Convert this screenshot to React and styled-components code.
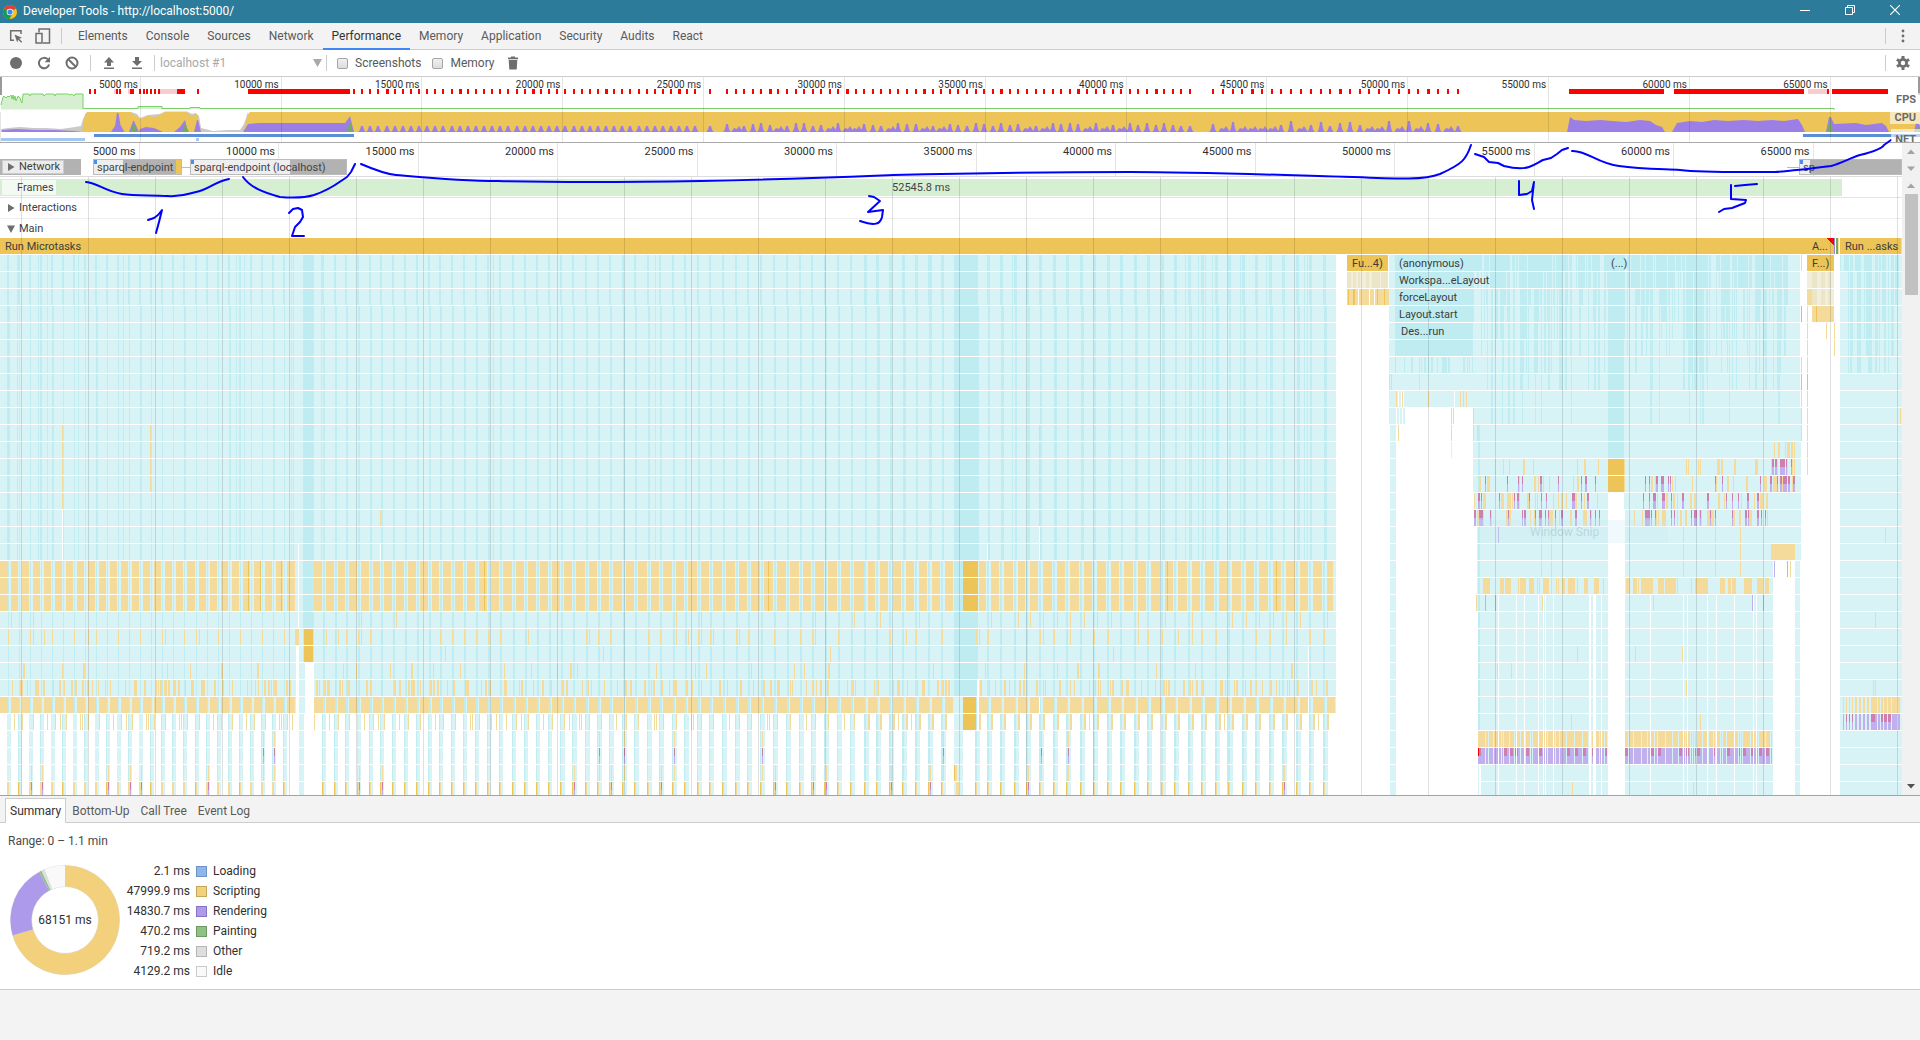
import React from 'react';
import styled, { createGlobalStyle } from 'styled-components';

const FONT = 'Roboto, "Open Sans", "Noto Sans", sans-serif';

const GlobalStyle = createGlobalStyle`
  * { box-sizing: border-box; }
  body { margin: 0; overflow: hidden; background: #f3f3f3; }
  button, input, select { font: inherit; color: inherit; margin: 0; padding: 0; border: 0; background: none; }
`;

/* ---------- colours ---------- */
const C = {
  light: '#d8f3f6',
  dark: '#bfecf1',
  sand: '#f5db9b',
  gold: '#edc457',
  olive: '#f2eedb',
  oliveDark: '#ebe6c8',
  lilac: '#c0b0ee',
  pink: '#cf7eb0',
  blue: '#a9c4ef',
  red: '#f00',
  violet: '#9c7fe6',
  green: '#74ad62',
  white: '#fff',
};

function makeRandom(seed) {
  let s = seed;
  return () => {
    s = (s * 1664525 + 1013904223) % 4294967296;
    return s / 4294967296;
  };
}

/* ---------- flame chart model ---------- */
const CHART_W = 1902;
const ROW = 17;
const ROWS = 33;

function buildFlame() {
  const rnd = makeRandom(42);
  const order = ['light', 'dark', 'olive', 'oliveDark', 'sand', 'gold', 'lilac', 'pink', 'blue', 'green', 'violet', 'red', 'white'];
  const paths = Object.fromEntries(order.map((k) => [k, '']));
  const put = (color, row, x, w, h = 16, dy = 0) => {
    paths[color] += `M${x} ${row * ROW + dy}h${w}v${h}h${-w}z`;
  };
  const span = (color, from, to, x, w) => {
    for (let r = from; r <= to; r += 1) put(color, r, x, w);
  };
  const event = (row, x, w) => {
    put('lilac', row, x, w);
    put('pink', row, x, w, 8);
  };

  /* first long task */
  const starts = [];
  for (let i = 0; i < 26; i += 1) starts.push(Math.round(11 + i * 11.03));
  starts.push(314);
  let x = 326;
  for (let i = 0; i < 44; i += 1) {
    starts.push(Math.round(x));
    x += 11.6 + (1.4 * i) / 43;
  }
  [868, 880, 893, 906, 919, 932, 945, 979, 991, 1004, 1018, 1030].forEach((v) => starts.push(v));
  for (let i = 0; i < 22; i += 1) starts.push(Math.round(1043 + i * 13.52));
  starts.push(1338);

  span('light', 1, 18, 0, 1336);
  span('light', 19, 27, 0, 1336);
  span('sand', 19, 21, 0, 8);
  put('sand', 27, 0, 8);
  [7, 17, 38, 40, 47, 78, 123, 236, 239, 244, 291, 293, 321, 323, 493, 655, 931, 1012, 1185, 1190, 1198, 1205, 1212, 1240, 1266, 1304, 1307].forEach((v) => span('dark', 1, 18, v, 1));
  starts.slice(0, -1).forEach((s, i) => {
    const next = starts[i + 1];
    const w = s > 860 ? 3 : 2;
    span('dark', 1, 3, s - 4, w);
    span('dark', 4, 18, s - 3, s < 300 && i % 4 ? 1 : s > 860 ? 3 - (i % 2) : 2);
    span('dark', 19, 27, s - 4 + (s > 860 ? 0 : 1), s < 300 ? 1 : 2);
    const nearGap = next - s > 20;
    span('sand', 19, 21, s, nearGap ? 8 : next - s - (s > 860 ? 5 : 4));
    put('sand', 27, s, nearGap ? 8 : next - s - 3);
    if (rnd() < 0.13) span('gold', 19, 21, s + 2 + Math.floor(rnd() * 5), 1);
    if (rnd() < (s > 860 ? 0.6 : 0.12)) put('sand', 22, s, 1);
    put('sand', 23, s - 3, 1);
    if (rnd() < 0.2) put('sand', 23, s, 1);
    if (rnd() < 0.04) put('sand', 24, s + 2, 1);
    if (rnd() < 0.35) put('sand', 25, s + Math.floor(rnd() * 8), 1 + Math.floor(rnd() * 1.4));
    const n = 1 + Math.floor(rnd() * 3);
    for (let k = 0; k < n; k += 1) put('sand', 26, s + Math.floor(rnd() * 10) - 3, 1 + Math.floor(rnd() * 1.7));
    span('light', 28, 32, s - 4, s > 560 ? 5 : 4);
    if (s > 150 || i % 2) span('dark', 28, 32, s - 4, s > 860 ? 2 : 1);
    put('sand', 28, s + (s < 860 && i % 3 === 0 ? 3 : 0), s > 860 ? 2 : 1);
    if (rnd() < 0.2) put('sand', 28, s + 5, 1);
    put('sand', 32, s - 4, 2);
    if (s > 314 || i % 4 === 1) put('gold', 32, s - 4, 1);
    if (rnd() < 0.13) {
      put('sand', 29, s - 2, 1);
      event(30, s - 2, 1);
      put('sand', 31, s - 2, 1);
    } else if (rnd() < 0.2) {
      put('sand', 31, s - 2, 1);
      event(32, s - 2, 1);
    }
  });
  span('dark', 1, 24, 303, 11);
  span('gold', 23, 24, 304, 9);
  span('sand', 23, 23, 295, 4);
  span('white', 24, 32, 296, 3);
  span('light', 28, 32, 299, 5);
  span('white', 25, 32, 305, 9);
  span('white', 18, 22, 298, 1);
  span('dark', 1, 26, 954, 24);
  span('gold', 19, 21, 963, 15);
  span('gold', 27, 28, 963, 13);
  span('white', 26, 28, 977, 2);
  span('light', 28, 32, 954, 9);
  put('gold', 31, 954, 1);
  put('sand', 31, 955, 2);
  put('sand', 32, 956, 3);
  span('sand', 11, 15, 62, 1);
  span('sand', 11, 14, 150, 1);
  span('white', 16, 18, 62, 1);
  put('sand', 16, 380, 1);
  put('white', 18, 380, 1);
  span('sand', 11, 16, 1039, 1);
  span('white', 17, 18, 1039, 1);
  put('white', 18, 987, 1);
  put('white', 27, 1039, 1);
  span('white', 24, 27, 1308, 1);

  /* top row */
  put('gold', 0, 0, 1835);
  put('gold', 0, 1840, 61);
  [1799, 1806, 1838, 1901].forEach((v) => put('sand', 0, v, 1));
  put('violet', 0, 1834, 1);
  put('green', 0, 1836, 2);
  paths.red += 'M1826 0h8v8z';

  /* short function call */
  put('gold', 1, 1347, 41);
  put('olive', 2, 1347, 41);
  [[1347, 4], [1353, 3], [1358, 2], [1366, 3], [1372, 8], [1381, 7]].forEach(([a, w]) => put('oliveDark', 2, a, w));
  put('sand', 3, 1347, 42);
  [[1348, 1], [1353, 2], [1377, 1], [1384, 1]].forEach(([a, w]) => put('gold', 3, a, w));
  [1358, 1369, 1374].forEach((v) => put('white', 3, v, 1));

  /* layout task */
  span('light', 1, 8, 1389, 412);
  span('dark', 1, 6, 1395, 78);
  span('dark', 1, 12, 1608, 16);
  const density = [0, 0.86, 0.78, 0.6, 0.52, 0.42, 0.34, 0.25, 0.17, 0.04, 0.04];
  const stripes = (x0, x1, dens) => {
    let c = x0;
    while (c < x1) {
      const w = rnd() < 0.7 ? 1 : 2;
      const v = rnd();
      for (let r = 1; r < dens.length; r += 1) if (v < dens[r]) put('dark', r, c, Math.min(w, x1 - c));
      c += w;
    }
  };
  stripes(1473, 1608, density);
  stripes(1624, 1788, density);
  stripes(1400, 1473, [0, 0, 0, 0, 0, 0, 0, 0.35, 0.04]);
  put('light', 6, 1411, 1);
  put('light', 9, 1389, 412);
  [1398, 1401, 1403, 1454].forEach((v) => put('white', 9, v, 1));
  span('light', 10, 10, 1389, 16);
  [1396, 1399, 1402].forEach((v) => put('white', 10, v, 1));
  span('light', 11, 32, 1390, 6);
  span('light', 10, 14, 1473, 135);
  span('light', 10, 15, 1624, 177);
  span('light', 15, 16, 1474, 134);
  span('light', 17, 21, 1477, 131);
  span('light', 22, 32, 1478, 130);
  span('light', 16, 18, 1625, 176);
  span('light', 19, 32, 1625, 148);
  span('light', 19, 32, 1795, 5);
  span('dark', 11, 28, 1478, 2);
  span('gold', 13, 14, 1608, 16);
  span('sand', 13, 14, 1624, 1);
  [[7, 1395], [8, 1389], [8, 1391], [9, 1396], [9, 1402], [9, 1428], [9, 1460], [9, 1463], [9, 1466], [10, 1451], [10, 1453], [11, 1398], [11, 1451], [10, 1473], [11, 1473], [11, 1477]].forEach(([r, a]) => put('sand', r, a, 1));
  put('light', 12, 1451, 1);
  const ticks = (row, x0, x1, count, kind, maxW = 2) => {
    for (let i = 0; i < count; i += 1) {
      const a = Math.floor(x0 + rnd() * (x1 - x0));
      const w = 1 + Math.floor(rnd() * rnd() * maxW * 1.4);
      if (kind === 'mix' && rnd() < 0.45) event(row, a, w);
      else put('sand', row, a, w);
    }
  };
  ticks(13, 1490, 1600, 8, 'sand');
  ticks(13, 1635, 1765, 11, 'sand');
  ticks(14, 1474, 1600, 22, 'mix');
  ticks(14, 1630, 1765, 20, 'mix');
  ticks(15, 1474, 1605, 34, 'mix');
  ticks(15, 1630, 1768, 34, 'mix');
  ticks(16, 1474, 1605, 44, 'mix', 3);
  ticks(16, 1630, 1768, 46, 'mix', 3);
  ticks(12, 1772, 1795, 12, 'sand');
  ticks(13, 1770, 1795, 22, 'mix');
  ticks(14, 1770, 1795, 24, 'mix');
  put('lilac', 17, 1498, 1);
  [1541, 1551, 1683, 1715, 1740].forEach((v) => span('sand', 17, 19, v, 1));
  put('sand', 18, 1771, 24);
  put('lilac', 19, 1774, 1);
  put('lilac', 19, 1787, 1);
  put('sand', 19, 1790, 1);
  ticks(20, 1480, 1605, 40, 'sand', 4);
  ticks(20, 1626, 1768, 42, 'sand', 5);
  [[21, 1476], [21, 1542], [21, 1653], [24, 1577], [24, 1635], [24, 1682], [25, 1497], [25, 1511], [26, 1686], [28, 1571], [28, 1700], [32, 1572], [32, 1693], [22, 1875], [17, 1885], [10, 1900], [26, 1873], [26, 1875]].forEach(([r, a]) => put('sand', r, a, 1));
  [[21, 1485], [21, 1495], [21, 1752], [21, 1763]].forEach(([r, a]) => put('lilac', r, a, 1));
  const dense = (x0, x1) => {
    let a = x0;
    while (a < x1) {
      const w = Math.min(1 + Math.floor(rnd() * 7), x1 - a);
      put('sand', 29, a, w);
      put('lilac', 30, a, w);
      if (rnd() < 0.5) put('pink', 30, a, Math.min(w, 3), 8);
      a += w + 1;
    }
  };
  dense(1478, 1607);
  dense(1625, 1772);
  put('red', 30, 1478, 1, 8);
  [[1498, 1], [1516, 1], [1524, 1], [1538, 1], [1543, 1], [1545, 1], [1553, 1], [1589, 2], [1593, 3], [1601, 1], [1650, 1], [1683, 1], [1687, 1], [1707, 1], [1716, 1], [1734, 1], [1753, 1], [1756, 1]].forEach(([a, w]) => span('white', 21, 32, a, w));
  span('white', 31, 32, 1479, 2);

  /* right edge of the layout task and animation frame */
  span('white', 1, 9, 1800, 1);
  [[1, 'sand'], [4, 'lilac'], [7, 'sand'], [8, 'blue'], [9, 'sand'], [10, 'sand'], [11, 'sand']].forEach(([r, c]) => put(c, r, 1801, 1));
  put('gold', 1, 1807, 27);
  put('olive', 2, 1807, 27);
  put('olive', 3, 1812, 22);
  put('sand', 3, 1807, 5);
  [[1812, 5], [1821, 4], [1828, 3]].forEach(([a, w]) => span('oliveDark', 2, 3, a, w));
  put('sand', 4, 1812, 22);
  put('gold', 4, 1816, 1);
  span('sand', 4, 13, 1807, 1);
  put('blue', 8, 1807, 1);
  put('sand', 5, 1826, 1);
  span('sand', 5, 6, 1834, 1);

  /* last microtask run */
  span('light', 1, 32, 1840, 62);
  stripes(1840, 1901, [0, 0.72, 0.6, 0.56, 0.52, 0.5, 0.47, 0.4]);
  let a = 1843;
  while (a < 1901) {
    const w = Math.min(a < 1870 ? 1 + Math.floor(rnd() * 2) : 2 + Math.floor(rnd() * 5), 1901 - a);
    put('sand', 27, a, w);
    put('lilac', 28, a, w);
    if (rnd() < 0.6) put('pink', 28, a, Math.min(w, 4), 8);
    a += w + (a < 1870 ? 2 : 1);
  }

  return order.map((k) => ({ color: C[k], d: paths[k] }));
}

const FLAME = buildFlame();
const FLAME_LABELS = [
  [0, 5, 'Run Microtasks'], [0, 1812, 'A...'], [0, 1845, 'Run ...asks'],
  [1, 1352, 'Fu...4)'], [1, 1399, '(anonymous)'], [1, 1611, '(...)'], [1, 1812, 'F...)'],
  [2, 1399, 'Workspa...eLayout'], [3, 1399, 'forceLayout'], [4, 1399, 'Layout.start'], [5, 1401, 'Des...run'],
];

/* ---------- overview model ---------- */
function buildOverview() {
  const marks = [[89, 2], [94, 2], [116, 2], [119, 2], [130, 4], [139, 2], [143, 2], [146, 2], [150, 2], [154, 2], [158, 2], [177, 8], [197, 2], [248, 102], [1569, 95], [1674, 130], [1827, 2], [1832, 56]];
  const pale = [[114, 2], [128, 2], [160, 17], [1808, 19]];
  const beats = [];
  for (let i = 0; i < 43; i += 1) beats.push(Math.round(354 + i * 8.13));
  beats.push(710);
  for (let i = 0; i < 55; i += 1) beats.push(Math.round(727 + i * 8.57));
  for (let i = 0; i < 26; i += 1) beats.push(Math.round(1213 + i * 9.78));
  const rnd = makeRandom(9);
  let peaks = '';
  beats.forEach((b, i) => {
    marks.push([b - 1, i % 9 === 4 ? 3 : 2]);
    if (i === 0) return;
    const growth = b > 1200 ? 5 : b > 720 ? 3 : 0;
    const blunt = b > 720 && rnd() < 0.2;
    if (blunt) peaks += `M${b - 5} 132l3 -4l3 1l2 -3l4 6z`;
    else {
      const h = 6 + Math.floor(rnd() * (growth + 1));
      peaks += `M${b - 4} 132q2 -1 3 ${-h}h2q1 ${h - 1} 3 ${h}z`;
    }
  });
  return { marks, pale, peaks };
}
const OVERVIEW = buildOverview();
const FPS_EDGE = '1 105 3 97 4 96 6 98 8 96 9 97 11 95 12 99 13 95 14 100 15 96 16 101 18 96 20 98 21 101 22 103 23 94 29 94 30 96 31 94 43 94 44 96 46 94 54 94 55 96 56 94 68 94 70 95 72 94 74 96 75 94 83 94';
const TIMES = Array.from({ length: 13 }, (_, i) => `${(i + 1) * 5000} ms`);

/* ---------- layout ---------- */
const Shell = styled.div`
  display: flex; flex-direction: column; height: 100vh; width: 100%;
  background: #fff; color: #303030; font: 12px/16px ${FONT}; overflow: hidden;
`;
const TitleBar = styled.header`
  display: flex; align-items: center; flex: none; height: 23px; padding: 0 3px;
  background: #2d7b9a; color: #fff;
`;
const Title = styled.h1`
  margin: 0 auto 0 6px; font-size: 12px; line-height: 23px; font-weight: 400;
`;
const WindowButton = styled.button`
  width: 45px; height: 20px; display: grid; place-items: center; align-self: flex-start;
  svg { display: block; }
`;
const TabBar = styled.nav`
  display: flex; align-items: center; flex: none; height: 27px;
  background: #f3f3f3; border-bottom: 1px solid #ccc; color: #5a5a5a;
`;
const IconButton = styled.button`
  width: ${(p) => p.$w || 28}px; height: 26px; display: grid; place-items: center; flex: none;
  color: #6e6e6e;
  svg { display: block; }
`;
const Divider = styled.span`
  width: 1px; height: 16px; background: #ccc; flex: none; margin: 0 ${(p) => p.$gap || 0}px;
`;
const Tab = styled.button`
  height: 27px; padding: 0 9px; line-height: 27px; align-self: flex-start;
  color: ${(p) => (p.$active ? '#333' : '#5a5a5a')};
  border-bottom: 2px solid ${(p) => (p.$active ? '#4285f4' : 'transparent')};
`;
const Spacer = styled.span`flex: 1;`;
const Toolbar = styled.div`
  display: flex; align-items: center; flex: none; height: 27px; padding-left: 2px;
  border-bottom: 1px solid #ccc;
`;
const SessionPicker = styled.label`
  display: flex; align-items: center; width: 168px; padding: 0 4px 0 2px; color: #a9a9a9;
  select { appearance: none; flex: 1; line-height: 16px; outline: 0; }
`;
const Check = styled.label`
  display: flex; align-items: center; gap: 7px; color: #5a5a5a; margin-left: ${(p) => p.$gap}px;
  input {
    appearance: none; width: 11px; height: 11px; border: 1px solid #a5a5a5; border-radius: 2px;
    background: linear-gradient(#f0f0f0, #dcdcdc);
  }
`;

const Workspace = styled.main`
  position: relative; display: flex; flex-direction: column; flex: 1; min-height: 0;
`;
const Overview = styled.section`
  display: grid; flex: none; height: 66px; overflow: hidden; border-bottom: 1px solid #aaa;
  > * { grid-area: 1 / 1; min-width: 0; }
`;
const Ruler = styled.div`
  display: flex; height: ${(p) => p.$h}px; color: #303030;
  font-size: ${(p) => p.$size}px; line-height: ${(p) => p.$line}px;
`;
const Tick = styled.span`
  flex: none; width: 7.335%; text-align: right; white-space: nowrap; padding-right: ${(p) => p.$pad}px;
  border-right: 1px solid rgba(0, 0, 0, 0.1);
`;
const OverviewRuler = styled(Ruler)`z-index: 1;`;
const Plot = styled.svg`
  display: block; width: 100%; height: ${(p) => p.$h}px;
`;
const LaneNames = styled.div`
  z-index: 1; display: flex; flex-direction: column; align-items: flex-end; gap: 5px; padding-top: 16px;
  font-size: 11px; line-height: 13px; font-weight: 700; color: #6a6a6a;
  span { padding: 0 4px; height: 13px; background: rgba(255, 255, 255, 0.6); }
  span:last-child { padding-top: 4px; height: 20px; }
`;

const Timeline = styled.section`
  display: flex; flex: 1; min-height: 0; overflow: hidden;
`;
const Lanes = styled.div`
  flex: 1; min-width: 0; display: flex; flex-direction: column; font-size: 11px;
`;
const NetworkPane = styled.div`
  position: relative; flex: none; height: 34px; border-bottom: 1px solid #ddd;
`;
const Request = styled.div`
  position: absolute; top: 16px; height: 16px; overflow: hidden; white-space: nowrap; line-height: 15px;
  border: 1px solid #bbb; padding-left: 3px; color: #444;
`;
const QueueMark = styled.i`
  position: absolute; left: 0; top: 0; width: 3px; height: 4px; background: #4b8fe8;
`;
const Whisker = styled.i`
  position: absolute; top: 24px; height: 1px; background: #bbb;
`;
const LaneButton = styled.button`
  position: relative; display: flex; align-items: center; gap: 4px; height: 14px; line-height: 14px;
  margin-left: ${(p) => (p.$boxed ? 2 : 0)}px; padding: 0 3px 0 4px; color: #404040;
  background: ${(p) => (p.$boxed ? 'rgba(255,255,255,.75)' : 'none')};
  border: ${(p) => (p.$boxed ? '1px solid #ccc' : 0)};
  svg { display: block; }
`;
const NetworkHead = styled.div`
  position: absolute; left: 0; top: 16px; width: 81px; height: 16px; padding-top: 1px; background: #b2b2b2;
`;
const Tracks = styled.div`
  position: relative; flex: 1; min-height: 0; overflow: hidden;
`;
const Track = styled.div`
  display: flex; align-items: center; height: ${(p) => (p.$last ? 19 : 21)}px; padding-left: 3px;
  border-bottom: ${(p) => (p.$last ? 0 : '1px solid #eee')};
`;
const FrameTrack = styled.div`
  display: flex; height: 21px; padding-top: 2px; border-bottom: 1px solid #e4e4e4;
`;
const FrameBar = styled.div`
  position: relative; display: grid; width: 96.85%; height: 17px; background: #d6efd2; line-height: 18px;
  justify-items: center; color: #444;
`;
const FrameLabel = styled.span`
  position: absolute; left: 2px; top: 1px; height: 15px; line-height: 15px; padding: 0 2px 0 15px;
  background: rgba(255, 255, 255, 0.7); color: #404040;
`;
const GridOverlay = styled(Plot)`
  position: absolute; left: 0; top: 0; height: 100%; pointer-events: none;
`;
const FlameWrap = styled.div`
  position: relative; height: ${ROWS * ROW}px;
`;
const FlameLabel = styled.span`
  position: absolute; font-size: 11px; line-height: 17px; white-space: nowrap; color: #3c3c3c;
`;
const Ghost = styled.div`
  position: absolute; width: 10%; height: 23px; line-height: 24px; padding-left: 52px;
  background: rgba(196, 232, 243, 0.25); color: rgba(120, 150, 160, 0.3); font-size: 12px;
`;
const ScrollColumn = styled.div`
  display: flex; flex-direction: column; align-items: center; flex: none; width: 18px; background: #f1f1f1; color: #a3a3a3;
  svg { display: block; flex: none; }
`;
const Thumb = styled.div`
  width: 13px; height: 101px; background: #c1c1c1; flex: none;
`;
const Notes = styled.svg`
  position: absolute; left: 0; top: 0; width: 100%; height: 180px; pointer-events: none; overflow: visible;
`;

const Details = styled.section`
  flex: none; border-top: 1px solid #a3a3a3;
`;
const DetailTabs = styled.nav`
  display: flex; align-items: flex-end; height: 27px; padding-left: 5px; background: #f3f3f3; border-bottom: 1px solid #ccc;
`;
const DetailTab = styled.button`
  height: 25px; line-height: 24px; padding: 0 4px; margin-bottom: -1px; margin-right: 1px;
  color: ${(p) => (p.$active ? '#333' : '#5a5a5a')};
  background: ${(p) => (p.$active ? '#fff' : 'none')};
  border: 1px solid ${(p) => (p.$active ? '#ccc' : 'transparent')};
  border-bottom: 0;
`;
const SummaryBody = styled.div`
  height: 167px; padding: 9px 8px; border-bottom: 1px solid #ccc; color: #303030;
`;
const Range = styled.p`margin: 0; line-height: 18px; color: #4a4a4a;`;
const SummaryRow = styled.div`display: flex; margin-top: 11px;`;
const Donut = styled.div`
  display: grid; place-items: center; width: 114px; height: 118px;
  > * { grid-area: 1 / 1; }
  svg { display: block; }
`;
const Legend = styled.table`
  border-collapse: collapse;
  td, th { padding: 0; height: 20px; line-height: 20px; font-weight: 400; text-align: left; }
  td:first-child { width: 68px; text-align: right; white-space: nowrap; }
`;
const Swatch = styled.span`
  display: block; width: 11px; height: 11px; margin: 0 6px; background: ${(p) => p.$c}; border: 1px solid ${(p) => p.$b};
`;
const Footer = styled.footer`flex: none; height: 50px; background: #f3f3f3;`;

/* ---------- small drawings ---------- */
const Triangle = ({ open }) => (
  <svg width="8" height="10" viewBox="0 0 8 10" fill="#6e6e6e"><path d={open ? 'M0 1.500h8L4 9z' : 'M1 1l6.500 4L1 9z'} /></svg>
);
const Arrow = ({ up, dark, h }) => (
  <svg width="18" height={h} viewBox="0 0 18 16" preserveAspectRatio="xMidYMid" fill={dark ? '#505050' : 'currentColor'}>
    <path d={up ? 'M9 6l4 4.500H5z' : 'M5 6h8L9 10.500z'} />
  </svg>
);

const SLICES = [
  [47999.9, '#f2d07c'], [14830.7, '#ae9aea'], [470.2, '#8fc184'], [719.2, '#dedede'], [4131.3, '#f9f9f9'],
];
function slicePaths() {
  const total = SLICES.reduce((s, [v]) => s + v, 0);
  let acc = 0;
  const pt = (r, t) => `${(57 + r * Math.sin(t)).toFixed(2)} ${(57 - r * Math.cos(t)).toFixed(2)}`;
  return SLICES.map(([v, fill]) => {
    const a = (acc / total) * Math.PI * 2;
    acc += v;
    const b = (acc / total) * Math.PI * 2;
    const big = b - a > Math.PI ? 1 : 0;
    return { fill, d: `M${pt(54.5, a)}A54.5 54.5 0 ${big} 1 ${pt(54.5, b)}L${pt(33.5, b)}A33.5 33.5 0 ${big} 0 ${pt(33.5, a)}z` };
  });
}
const LEGEND = [
  ['2.1 ms', 'Loading', '#8fb6ea', '#6d93c6'],
  ['47999.9 ms', 'Scripting', '#f2d07c', '#c5a65a'],
  ['14830.7 ms', 'Rendering', '#ae9aea', '#8673c4'],
  ['470.2 ms', 'Painting', '#8fc184', '#6d9a62'],
  ['719.2 ms', 'Other', '#dedede', '#b5b5b5'],
  ['4129.2 ms', 'Idle', '#f9f9f9', '#cacaca'],
];
const pct = (v) => `${(v / CHART_W) * 100}%`;

function OverviewPlot() {
  return (
    <Plot $h={65} viewBox="0 77 1920 65" preserveAspectRatio="none" aria-hidden="true">
      <path d="M0 77h2v18h-2zM1918 77h2v18h-2z" fill="#999" />
      <path d={`M1 109.500L${FPS_EDGE}V109.500zM138 106h24v3h-24zM190 107h10v2h-10z`} fill="#d6efd0" />
      <path d={`M${FPS_EDGE}V108.500H138V106.500H162V108.500H190V107.500H200V108.500H1834V110`} fill="none" stroke="#7bd068" />
      <path d="M0 112v30" stroke="#ccc" />
      <path d="M1 132v-3l7 -1 12 -1 14 1 12 0 15 1 14 -2 6 -1 2 -7 4 -7H131L137 114 140 118 148 115 160 114 165 111.500H187L192 114 196 113 199 116 201 128 213 131 228 130 240 130 244 124 248 112V132z" fill="#c9c9c9" />
      <path d="M82 132L85 114 88 112H130L136 116 141 119 148 116 155 117 163 113 166 112H186L192 116 197 114 201 132zM243 132L248 114 250 112H1920V132z" fill={C.gold} />
      <path d="M2 132v-2l14 -1 20 1 18 0 20 1 8 1zM111 132l4 -6 2 -13h1.500l2 12 4 7zM129 132l4 -11h1l5 11zM139 132l1 -3 6 -2 8 1 9 4zM174 132l6 -5 5 -7 3 12zM194 132l3 -12h1l3 12zM243 132l5 -8 10 -1h87l3 -4 2 -3 4 16z" fill={C.violet} />
      <path d="M7 132l4 -1 5 1zM131 132l2 -8h1l3 8zM182 132l3 -8 4 8zM347 132l3 -11 3 11z" fill={C.green} />
      <path d={OVERVIEW.peaks} fill={C.violet} />
      <path d="M1567 132L1570 117 1574 120 1586 121 1600 120 1612 121 1626 122 1640 120 1650 121 1656 125 1662 127 1665 132zM1672 132L1677 123 1690 121 1702 122 1714 120 1728 121 1744 120 1758 121 1772 120 1784 121 1798 119 1802 125 1805 132zM1826 132L1829 117H1831L1834 124 1856 123 1866 125 1882 123 1886 126 1889 132zM1914 132l2 -9h2l2 3V132z" fill={C.violet} />
      <path d="M1827 132l3 -13 3 13zM1915 132l3 -5 2 2v3z" fill={C.green} />
      <g shapeRendering="crispEdges">
        {OVERVIEW.pale.map(([x, w]) => <rect key={x} x={x} y="89" width={w} height="5" fill="#f8cccc" />)}
        {OVERVIEW.marks.map(([x, w]) => <rect key={x} x={x} y="89" width={w} height="5" fill="#f00" />)}
        <rect x="94" y="134" width="260" height="3" fill="#5b8ed2" />
        <rect x="1803" y="134" width="117" height="3" fill="#5b8ed2" />
        <rect x="1" y="138" width="84" height="3" fill="#a5c6f5" />
        <rect x="196" y="138" width="3" height="3" fill="#a5c6f5" />
      </g>
    </Plot>
  );
}

const NOTE_PATHS = [
  'M86 182C98 183 104 191 122 194C135 196 150 195 167 196C185 197 190 193 196 192C208 190 214 182 229 179',
  'M243 177C250 187 262 192 280 197C292 198 304 198 314 195C326 191 334 186 341 181L347 177L351 172L355 164',
  'M361 164C375 170 385 174 396 175C430 178 460 181 498 181C580 183 640 182 701 181C790 179 840 177 893 175C980 173 1060 172 1130 172C1200 172 1280 175 1353 177C1400 179 1425 180 1440 174C1462 164 1466 160 1471 145',
  'M1475 154L1484 157L1489 162L1498 163L1504 166C1512 168 1523 169 1529 167C1535 165 1539 162 1543 160L1551 158L1557 154L1562 150L1568 148',
  'M1572 151C1586 150 1598 164 1619 166C1640 169 1660 169 1680 170C1705 173 1753 172 1775 172C1790 171 1815 168 1831 166C1842 163 1850 158 1860 155C1872 152 1882 149 1884 145L1891 140',
  'M148 220L154 218L158 215L162 210L159 222L156 233',
  'M289 213L293 209L298 208L302 210L303 217L300 222L295 227L292 236L304 236',
  'M869 196L874 197L880 201L868 212L883 210L882 217C880 226 872 225 860 221',
  'M1519 181V195L1527 194L1532 191L1534 182L1532 200L1534 209',
  'M1735 186L1745 185L1757 184M1731 185V199L1746 200L1745 203L1732 208L1724 209L1719 212',
];

export default function App() {
  return (
    <Shell>
      <GlobalStyle />
      <TitleBar>
        <svg width="14" height="14" viewBox="0 0 14 14" aria-hidden="true">
          <circle cx="7" cy="7" r="7" fill="#fbc116" />
          <path d="M7 7L.94 3.500A7 7 0 0 1 13.100 3.500z" fill="#db4437" />
          <path d="M7 7L.94 3.500A7 7 0 0 0 6.500 14L9.500 8.500z" fill="#0f9d58" />
          <circle cx="7" cy="7" r="3.300" fill="#fff" /><circle cx="7" cy="7" r="2.600" fill="#4285f4" />
        </svg>
        <Title>Developer Tools - http://localhost:5000/</Title>
        <WindowButton aria-label="Minimize"><svg width="10" height="10" stroke="#fff"><path d="M0 5.500h10" /></svg></WindowButton>
        <WindowButton aria-label="Restore"><svg width="10" height="10" stroke="#fff" fill="none"><path d="M.5 2.500h7v7h-7zM2.500 2.500v-2h7v7h-2" /></svg></WindowButton>
        <WindowButton aria-label="Close"><svg width="10" height="10" stroke="#fff" strokeWidth="1.200"><path d="M0 0l10 10M10 0L0 10" /></svg></WindowButton>
      </TitleBar>

      <TabBar>
        <IconButton $w={32} aria-label="Inspect element">
          <svg width="14" height="14" viewBox="0 0 14 14" fill="none" stroke="currentColor" strokeWidth="1.500"><path d="M5 11.200H1.700V1.700H12V5" /><path d="M5.500 5.500l7.500 3.200-2.800 1 3 3-1 1-3-3-1 2.800z" fill="currentColor" stroke="none" /></svg>
        </IconButton>
        <IconButton $w={22} aria-label="Toggle device toolbar">
          <svg width="16" height="16" viewBox="0 0 16 16" fill="none" stroke="currentColor" strokeWidth="1.500"><path d="M4 4.500V1h10.500v14H8" /><path d="M1 5.500h6v9.500H1z" /></svg>
        </IconButton>
        <Divider $gap={7} />
        {['Elements', 'Console', 'Sources', 'Network', 'Performance', 'Memory', 'Application', 'Security', 'Audits', 'React'].map((t) => (
          <Tab key={t} $active={t === 'Performance'}>{t}</Tab>
        ))}
        <Spacer />
        <Divider />
        <IconButton $w={34} aria-label="More options">
          <svg width="4" height="14" fill="currentColor"><circle cx="2" cy="2" r="1.400" /><circle cx="2" cy="7" r="1.400" /><circle cx="2" cy="12" r="1.400" /></svg>
        </IconButton>
      </TabBar>

      <Toolbar>
        <IconButton aria-label="Record"><svg width="12" height="12"><circle cx="6" cy="6" r="6" fill="currentColor" /></svg></IconButton>
        <IconButton aria-label="Reload"><svg width="14" height="14" viewBox="0 0 14 14" fill="none" stroke="currentColor" strokeWidth="2"><path d="M12.100 8.500A5.200 5.200 0 1 1 10.800 3.400" /><path d="M13 .8v5.400H7.600z" fill="currentColor" stroke="none" /></svg></IconButton>
        <IconButton aria-label="Clear"><svg width="14" height="14" viewBox="0 0 14 14" fill="none" stroke="currentColor" strokeWidth="2"><circle cx="7" cy="7" r="5.500" /><path d="M3 3l8 8" /></svg></IconButton>
        <Divider $gap={4} />
        <IconButton aria-label="Load profile"><svg width="12" height="14" viewBox="0 0 12 14" fill="currentColor"><path d="M6 1l5 5.500H8V10H4V6.500H1zM1 11.500h10v1.400H1z" /></svg></IconButton>
        <IconButton aria-label="Save profile"><svg width="12" height="14" viewBox="0 0 12 14" fill="currentColor"><path d="M6 10L1 5h3V1h4v4h3zM1 11.500h10v1.400H1z" /></svg></IconButton>
        <Divider $gap={3} />
        <SessionPicker>
          <select aria-label="Recording" defaultValue="localhost #1"><option>localhost #1</option></select>
          <svg width="9" height="8" fill="#a9a9a9" aria-hidden="true"><path d="M0 0h9L4.500 8z" /></svg>
        </SessionPicker>
        <Divider />
        <Check $gap={10}><input type="checkbox" />Screenshots</Check>
        <Check $gap={11}><input type="checkbox" />Memory</Check>
        <IconButton $w={36} aria-label="Collect garbage"><svg width="10" height="14" viewBox="0 0 10 14" fill="currentColor"><path d="M3 .5h4v1h3v1.700H0V1.500h3zM.7 4h8.600l-.6 9.500H1.300z" /></svg></IconButton>
        <Spacer />
        <Divider />
        <IconButton $w={34} aria-label="Capture settings">
          <svg width="14" height="14" viewBox="0 0 14 14" fill="none" stroke="currentColor"><circle cx="7" cy="7" r="3.600" strokeWidth="2.800" /><g strokeWidth="3"><path d="M7 0v2.500M7 11.500V14M.9 3.500l2.200 1.250M10.900 9.250l2.200 1.250M.9 10.500l2.200-1.250M10.900 4.750l2.200-1.250" /></g></svg>
        </IconButton>
      </Toolbar>

      <Workspace>
        <Overview>
          <OverviewRuler $h={65} $size={10} $line={15}>
            {TIMES.map((t) => <Tick key={t} $pad={2}>{t}</Tick>)}
          </OverviewRuler>
          <OverviewPlot />
          <LaneNames><span>FPS</span><span>CPU</span><span>NET</span></LaneNames>
        </Overview>

        <Timeline>
          <Lanes>
            <NetworkPane>
              <Ruler $h={33} $size={11} $line={17}>
                {TIMES.map((t) => <Tick key={t} $pad={3}>{t}</Tick>)}
              </Ruler>
              <NetworkHead><LaneButton $boxed><Triangle />Network</LaneButton></NetworkHead>
              <Request style={{ left: pct(93), width: pct(89), background: 'linear-gradient(90deg,#eee 29px,#b2b2b2 29px,#b2b2b2 82px,#edc457 82px)' }}><QueueMark />sparql-endpoint</Request>
              <Whisker style={{ left: pct(182), width: pct(8) }} />
              <Request style={{ left: pct(190), width: pct(157), background: 'linear-gradient(90deg,#eee 99px,#b2b2b2 99px)' }}><QueueMark />sparql-endpoint (localhost)</Request>
              <Whisker style={{ left: pct(1787), width: pct(12) }} />
              <Request style={{ left: pct(1799), width: pct(103), background: 'linear-gradient(90deg,#eee 10px,#b2b2b2 10px)' }}><QueueMark />sp</Request>
            </NetworkPane>

            <Tracks>
              <FrameTrack><FrameBar><FrameLabel>Frames</FrameLabel>52545.8 ms</FrameBar></FrameTrack>
              <Track><LaneButton><Triangle />Interactions</LaneButton></Track>
              <Track $last><LaneButton><Triangle open />Main</LaneButton></Track>
              <FlameWrap>
                <Plot $h={ROWS * ROW} viewBox={`0 0 ${CHART_W} ${ROWS * ROW}`} preserveAspectRatio="none" shapeRendering="crispEdges" aria-hidden="true">
                  {FLAME.map((l) => <path key={l.color} d={l.d} fill={l.color} />)}
                </Plot>
                <Ghost style={{ left: pct(1478), top: 282 }}>Window Snip</Ghost>
                {FLAME_LABELS.map(([row, x, t]) => (
                  <FlameLabel key={`${row}-${x}`} style={{ left: pct(x), top: row * ROW }}>{t}</FlameLabel>
                ))}
              </FlameWrap>
              <GridOverlay viewBox={`0 0 ${CHART_W} 600`} preserveAspectRatio="none" shapeRendering="crispEdges" aria-hidden="true">
                {Array.from({ length: 29 }, (_, i) => (
                  <rect key={i} x={Math.round(21 + i * 67)} y="0" width="1" height="600" fill="rgba(0,0,0,.12)" />
                ))}
              </GridOverlay>
            </Tracks>
          </Lanes>
          <ScrollColumn>
            <Arrow up h={17} /><Arrow h={17} /><Arrow up h={17} />
            <Thumb />
            <Spacer />
            <Arrow dark h={18} />
          </ScrollColumn>
        </Timeline>

        <Notes viewBox="0 77 1920 180" preserveAspectRatio="none" fill="none" stroke="#00f" strokeWidth="2" strokeLinecap="round" strokeLinejoin="round" aria-hidden="true">
          {NOTE_PATHS.map((d) => <path key={d} d={d} />)}
        </Notes>
      </Workspace>

      <Details>
        <DetailTabs>
          {['Summary', 'Bottom-Up', 'Call Tree', 'Event Log'].map((t) => (
            <DetailTab key={t} $active={t === 'Summary'}>{t}</DetailTab>
          ))}
        </DetailTabs>
        <SummaryBody>
          <Range>Range: 0 – 1.1 min</Range>
          <SummaryRow>
            <Donut>
              <svg width="114" height="114" aria-hidden="true">
                <circle cx="57" cy="57" r="54.500" fill="none" stroke="#ddd" /><circle cx="57" cy="57" r="33.500" fill="none" stroke="#ddd" />
                {slicePaths().map((s) => <path key={s.fill} d={s.d} fill={s.fill} />)}
              </svg>
              <span>68151 ms</span>
            </Donut>
            <Legend>
              <tbody>
                {LEGEND.map(([v, name, c, b]) => (
                  <tr key={name}><td>{v}</td><td><Swatch $c={c} $b={b} /></td><th scope="row">{name}</th></tr>
                ))}
              </tbody>
            </Legend>
          </SummaryRow>
        </SummaryBody>
      </Details>
      <Footer />
    </Shell>
  );
}
